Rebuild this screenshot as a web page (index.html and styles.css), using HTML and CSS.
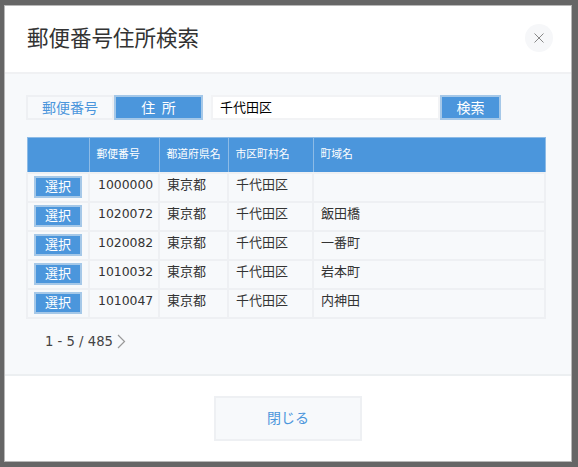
FILE: index.html
```html
<!DOCTYPE html>
<html lang="ja">
<head>
<meta charset="utf-8">
<title>郵便番号住所検索</title>
<link rel="stylesheet" href="styles.css">
</head>
<body>
<div class="dialog">
  <header class="head">
    <h1 class="title">郵便番号住所検索</h1>
    <button class="close" aria-label="閉じる">
      <svg class="close-icon" viewBox="0 0 10 10" width="10" height="10"><path d="M.5.5l9 9M9.500.5l-9 9"/></svg>
    </button>
  </header>
  <main class="body">
    <div class="search">
      <button class="tab">郵便番号</button>
      <button class="tab tab-on">住&nbsp;&nbsp;所</button>
      <input class="field" type="text" value="千代田区">
      <button class="go">検索</button>
    </div>
    <table class="results">
      <thead>
        <tr><th class="c-btn"></th><th class="c-zip">郵便番号</th><th class="c-pref">都道府県名</th><th class="c-city">市区町村名</th><th>町域名</th></tr>
      </thead>
      <tbody>
        <tr><td><button class="pick">選択</button></td><td class="num">1000000</td><td>東京都</td><td>千代田区</td><td></td></tr>
        <tr><td><button class="pick">選択</button></td><td class="num">1020072</td><td>東京都</td><td>千代田区</td><td>飯田橋</td></tr>
        <tr><td><button class="pick">選択</button></td><td class="num">1020082</td><td>東京都</td><td>千代田区</td><td>一番町</td></tr>
        <tr><td><button class="pick">選択</button></td><td class="num">1010032</td><td>東京都</td><td>千代田区</td><td>岩本町</td></tr>
        <tr><td><button class="pick">選択</button></td><td class="num">1010047</td><td>東京都</td><td>千代田区</td><td>内神田</td></tr>
      </tbody>
    </table>
    <div class="pager">
      <span class="count">1 - 5 / 485</span>
      <svg class="next" viewBox="0 0 9 15" width="9" height="15"><path d="M1 1l6.500 6.500L1 14"/></svg>
    </div>
  </main>
  <footer class="foot">
    <button class="shut">閉じる</button>
  </footer>
</div>
</body>
</html>
```
FILE: styles.css
```css
* { box-sizing: border-box; }
html, body { height: 100%; }
body {
  margin: 0;
  background: #666;
  padding: 5px 6px 5px 4px;
  font-family: "Noto Sans CJK JP", "DejaVu Sans", sans-serif;
  color: #333;
  overflow: hidden;
}
button, input { font-family: inherit; padding: 0; margin: 0; }
.dialog {
  height: 457px;
  background: #fff;
  border: 1px solid #b8b8b8;
  display: flex;
  flex-direction: column;
}
.head {
  height: 68px;
  flex: none;
  display: flex;
  align-items: center;
  justify-content: space-between;
  padding: 0 18px 3px 22px;
  border-bottom: 2px solid #f0f1f3;
}
.title { margin: 0 0 3px; font-size: 21.500px; font-weight: 400; color: #333; }
.close {
  width: 28px;
  height: 28px;
  border-radius: 50%;
  border: 0;
  background: #f6f7f9;
  display: flex;
  align-items: center;
  justify-content: center;
}
.close-icon { fill: none; stroke: #888; stroke-width: 1; }
.body {
  height: 302px;
  flex: none;
  background: #f7f9fb;
  padding: 21px 25px 0 21px;
  border-bottom: 2px solid #eceff1;
}
.search { display: flex; height: 25px; }
.tab {
  width: 88px;
  height: 25px;
  border: 2px solid #eef0f3;
  background: #f7f9fb;
  color: #4b96dc;
  font-size: 14px;
  line-height: 1;
  padding-bottom: 2px;
}
.tab-on, .go {
  border: 2px solid #a5c8e8;
  background: #4b96dc;
  color: #fff;
}
.tab-on { width: 89px; }
.field {
  width: 229px;
  height: 25px;
  margin-left: 8px;
  border: 2px solid #f2f3f5;
  background: #fff;
  padding: 0 7px 3px;
  font-size: 13px;
  color: #000;
  outline: 0;
}
.go { width: 61px; height: 25px; font-size: 14px; padding-bottom: 2px; }
.results {
  margin-top: 17px;
  width: 520px;
  table-layout: fixed;
  border-collapse: collapse;
  font-size: 13px;
}
.results th {
  height: 35px;
  background: #4b96dc;
  border: 1px solid #8dbbe6;
  color: #fff;
  font-size: 10.800px;
  font-weight: 400;
  text-align: left;
  padding: 0 6px 3px 7px;
  white-space: nowrap;
}
.c-btn { width: 62px; }
.c-zip { width: 70px; }
.c-pref { width: 69px; }
.c-city { width: 85px; }
.results td {
  height: 29px;
  border: 2px solid #eef0f3;
  padding: 0 7px 6px;
  line-height: 18px;
  vertical-align: middle;
  color: #333;
}
.results td:first-child { padding: 1px 0 2px 6px; }
.results td.num { font-family: "DejaVu Sans", sans-serif; font-size: 12.400px; padding-left: 8px; padding-bottom: 5px; }
.pick {
  display: block;
  width: 48px;
  height: 22px;
  border: 2px solid #a5c8e8;
  background: #4b96dc;
  color: #fff;
  font-size: 13px;
  line-height: 1;
  padding-bottom: 3px;
}
.pager {
  display: flex;
  align-items: center;
  gap: 4px;
  margin-top: 13px;
  padding-left: 19px;
  height: 20px;
}
.count { font-family: "DejaVu Sans", sans-serif; font-size: 13.200px; color: #444; }
.next { fill: none; stroke: #999; stroke-width: 1.200; }
.foot {
  flex: 1;
  display: flex;
  justify-content: center;
  padding: 20px 0 0 0;
}
.shut {
  width: 148px;
  height: 45px;
  border: 2px solid #eef0f3;
  background: #f7f9fb;
  color: #4b96dc;
  font-size: 14px;
  padding-bottom: 4px;
}
```
